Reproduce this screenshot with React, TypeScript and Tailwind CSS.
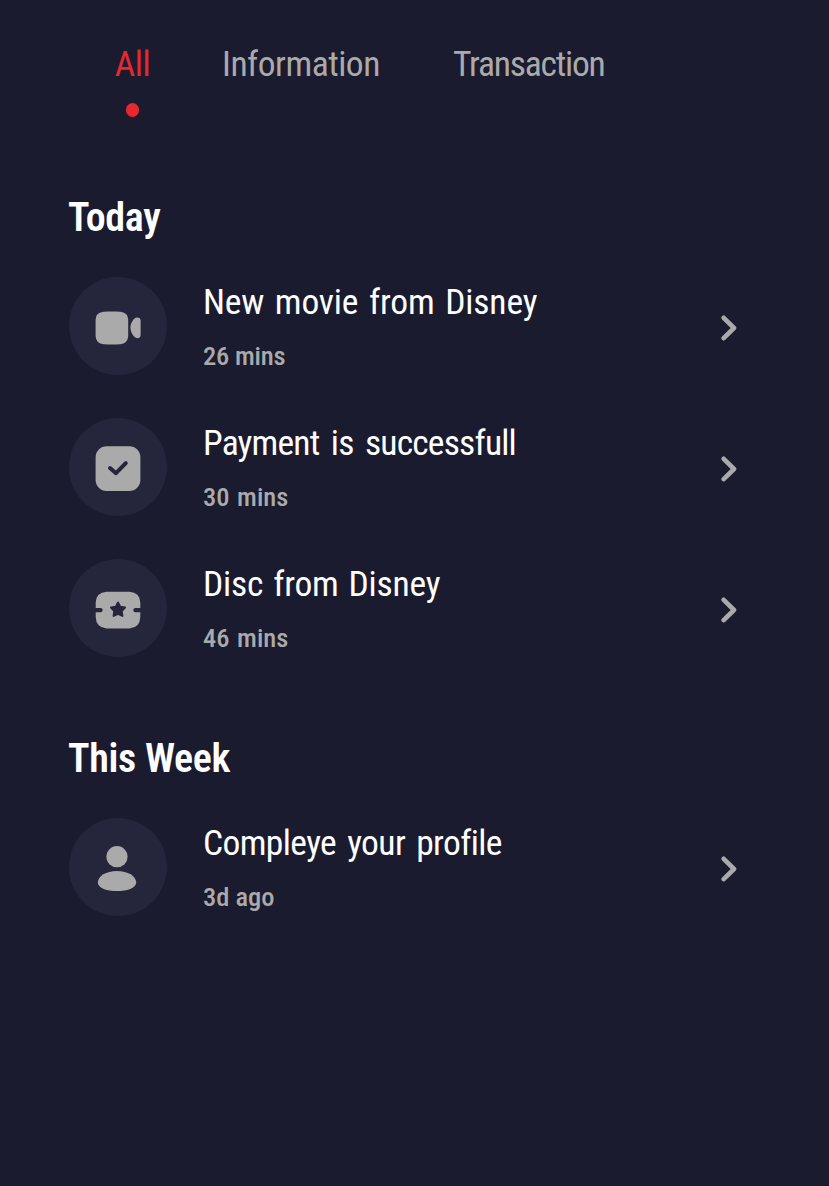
import type { ReactNode } from "react";

type Notice = { title: string; time: string; titleClass: string; timeClass: string; icon: ReactNode };

const VideoIcon = () => (
  <svg viewBox="0 0 46 46" className="size-[46px] fill-[#aaaaaa]">
    <path d="M9 6.800C14 6.300 20 6.300 25 6.800Q33 7.300 33.200 14.500V31Q33 38.500 25 39.200C20 39.500 14 39.500 9 39.200Q.7 38.500 .6 31V14.500Q.7 7.300 9 6.800Z" />
    <path d="M35.400 22.800C35.400 18.300 38.500 13 41.500 12.500Q45.600 12 45.600 15.800V30Q45.600 33.300 42 33.300C39 32.800 35.400 27.300 35.400 22.800Z" />
  </svg>
);

const CheckIcon = () => (
  <svg viewBox="0 0 46 46" className="size-[46px]">
    <rect x="0.600" y="0.200" width="44.800" height="44.800" rx="11" fill="#aaaaaa" />
    <path d="M15 22L21 27.200L30.800 17.200" fill="none" stroke="#25253b" strokeWidth="4" strokeLinecap="round" strokeLinejoin="round" />
  </svg>
);

const TicketIcon = () => (
  <svg viewBox="0 0 46 46" className="size-[46px]">
    <path d="M11.500 4.700H34.500Q45 5.500 45.300 15.500V20.900H40.500A2.200 2.200 0 0 0 40.500 25.300H45.300V30Q45 40.500 34.500 41.600H11.500Q1 40.500 .7 30V25.300H5.500A2.200 2.200 0 0 0 5.500 20.900H.7V15.500Q1 5.500 11.500 4.700Z" fill="#aaaaaa" />
    <path d="M23 15.500L25.200 19.700L30 20.500L26.700 24L27.400 28.900L23 26.900L18.600 28.900L19.300 24L16 20.500L20.800 19.700Z" fill="#25253b" stroke="#25253b" strokeWidth="2" strokeLinejoin="round" />
  </svg>
);

const PersonIcon = () => (
  <svg viewBox="0 0 46 46" className="size-[46px] fill-[#aaaaaa]">
    <circle cx="22" cy="10.700" r="10.600" />
    <path d="M2.800 36.500C3 30 11 25 22 25S41 30 41.200 36.500C41 42.500 32 45 22 45S3 42.500 2.800 36.500Z" />
  </svg>
);

const Chevron = () => (
  <svg viewBox="0 0 16 26" className="mt-1 h-[26px] w-4">
    <path d="M2.700 2.800L13 13L2.700 23.200" fill="none" stroke="#aaaaaa" strokeWidth="4.600" strokeLinecap="round" strokeLinejoin="round" />
  </svg>
);

const today: Notice[] = [
  { title: "New movie from Disney", time: "26 mins", titleClass: "tracking-[-0.15px] [word-spacing:2.6px]", timeClass: "tracking-[-0.2px]", icon: <VideoIcon /> },
  { title: "Payment is successfull", time: "30 mins", titleClass: "tracking-[-0.8px] [word-spacing:4px]", timeClass: "[word-spacing:1.5px]", icon: <CheckIcon /> },
  { title: "Disc from Disney", time: "46 mins", titleClass: "tracking-[-0.2px] [word-spacing:2px]", timeClass: "[word-spacing:1.5px]", icon: <TicketIcon /> },
];

const week: Notice[] = [
  { title: "Compleye your profile", time: "3d ago", titleClass: "tracking-[-0.6px] [word-spacing:3.5px]", timeClass: "", icon: <PersonIcon /> },
];

function Row({ notice }: { notice: Notice }) {
  return (
    <li className="flex h-[98px] items-center">
      <div className="ml-[0.600px] flex size-[98.400px] shrink-0 items-center justify-center rounded-full bg-[#25253b] pt-1">
        {notice.icon}
      </div>
      <div className="ml-[36px] flex flex-1 flex-col self-start pt-1">
        <span className={"self-start text-[35.500px] leading-[42px] font-normal whitespace-nowrap text-white " + notice.titleClass}>{notice.title}</span>
        <span className={"mt-[17px] self-start text-[26.500px] leading-[32px] font-medium whitespace-nowrap text-[#aaaaaa] " + notice.timeClass}>{notice.time}</span>
      </div>
      <Chevron />
    </li>
  );
}

function Section({ title, notices, className }: { title: string; notices: Notice[]; className: string }) {
  return (
    <section className={className}>
      <h2 className="text-[40px] leading-[48px] font-[650] tracking-[-0.300px] text-white">{title}</h2>
      <ul className="mt-[35px] flex flex-col gap-[43px]">
        {notices.map((n) => (
          <Row key={n.title} notice={n} />
        ))}
      </ul>
    </section>
  );
}

export default function App() {
  return (
    <main className="flex min-h-[1186px] w-full flex-col bg-[#1a1b2f] pr-[92px] pl-[68px] font-[Roboto,sans-serif] [font-stretch:75%]">
      <nav className="flex h-[122px] items-start pt-[43px] pl-[46px] text-[35.500px] leading-[42px] font-normal text-[#aaaaaa]">
        <button className="flex w-[37px] flex-col items-center text-[#e7282e]">
          <span className="tracking-[-0.500px]">All</span>
          <i className="mt-[18px] size-[13.500px] rounded-full bg-[#e7282e]" />
        </button>
        <button className="ml-[71px] w-[160px] text-left tracking-[-0.500px]">Information</button>
        <button className="ml-[71px] text-left tracking-[-1.200px]">Transaction</button>
      </nav>
      <Section title="Today" notices={today} className="mt-[72px]" />
      <Section title="This Week" notices={week} className="mt-[78px]" />
    </main>
  );
}
